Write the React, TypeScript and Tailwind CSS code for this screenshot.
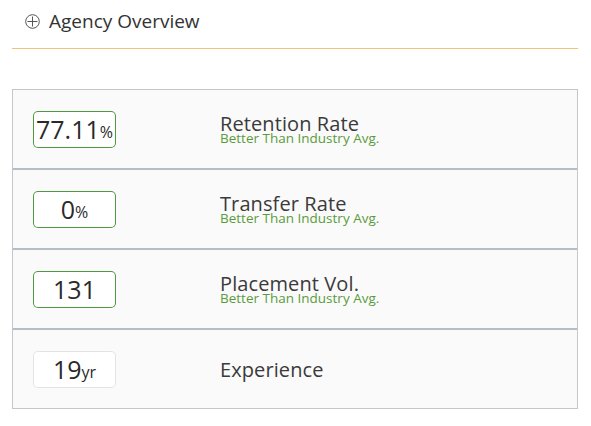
import React from 'react'

type Stat = {
  value: string
  unit?: string
  label: string
  note?: string
  highlight: boolean
}

const stats: Stat[] = [
  { value: '77.11', unit: '%', label: 'Retention Rate', note: 'Better Than Industry Avg.', highlight: true },
  { value: '0', unit: '%', label: 'Transfer Rate', note: 'Better Than Industry Avg.', highlight: true },
  { value: '131', label: 'Placement Vol.', note: 'Better Than Industry Avg.', highlight: true },
  { value: '19', unit: 'yr', label: 'Experience', highlight: false },
]

const StatRow = ({ stat, last }: { stat: Stat; last: boolean }) => {
  return (
    <div
      className={
        last
          ? 'flex h-[78px] items-center pl-[20px]'
          : 'flex h-[80px] items-center border-b-2 border-solid border-b-[color:#b5bdc5] pl-[20px]'
      }
    >
      <div
        className={
          stat.highlight
            ? 'flex h-[37px] w-[83px] items-center justify-center rounded-[5px] bg-white text-[#2a2a2a] shadow-[inset_0_0_0_1px_#4f9a3f]'
            : 'flex h-[37px] w-[83px] items-center justify-center rounded-[5px] bg-white text-[#2a2a2a] shadow-[inset_0_0_0_1px_#e3e3e3]'
        }
      >
        <span className="text-[25px] leading-none">{stat.value}</span>
        {stat.unit && <span className="mt-[5px] text-[16px] leading-none">{stat.unit}</span>}
      </div>
      <div className="ml-[104px] flex flex-col">
        <span className="text-[20px] leading-[17px] tracking-[0.1px] text-[#3a3a3a]">{stat.label}</span>
        {stat.note && (
          <span className="text-[13.5px] leading-[12px] text-[#5b9a3c]">{stat.note}</span>
        )}
      </div>
    </div>
  )
}

export default function App() {
  return (
    <div className="h-[426px] w-[591px] bg-white font-['Open_Sans',sans-serif]">
      <div className="mx-[12px] flex h-[48px] items-center pb-[6px] pl-[13px]">
        <svg width="15" height="15" viewBox="0 0 15 15" className="text-[#555]">
          <circle cx="7.5" cy="7.5" r="6.8" fill="none" stroke="currentColor" strokeWidth="1" />
          <path d="M7.5 2.5v10M2.5 7.5h10" stroke="currentColor" strokeWidth="1" />
        </svg>
        <span className="ml-[9px] text-[19px] text-[#333]">Agency Overview</span>
      </div>
      <div className="mx-[12px] h-px w-[566px] bg-[#f1c27a]" />
      <div className="mx-[12px] mt-[40px] w-[566px] border border-solid border-[color:#c3c7cb] bg-[#fafafa]">
        {stats.map((s, i) => (
          <StatRow key={s.label} stat={s} last={i === stats.length - 1} />
        ))}
      </div>
    </div>
  )
}
